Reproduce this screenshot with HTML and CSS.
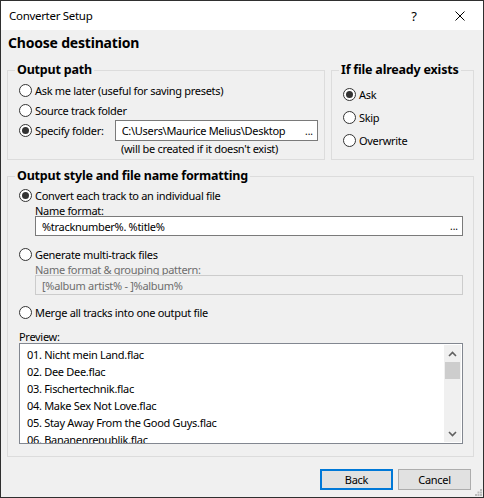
FILE: index.html
```html
<!DOCTYPE html>
<html>
<head>
<meta charset="utf-8">
<title>Converter Setup</title>
<link rel="stylesheet" href="styles.css">
</head>
<body>
<div class="window">
  <div class="titlebar">
    <div class="title">Converter Setup</div>
    <div class="caption-btn help">?</div>
    <div class="caption-btn close">
      <svg width="10" height="10" viewBox="0 0 10 10"><path d="M0.5 0.5 L9.5 9.5 M9.5 0.5 L0.5 9.5" stroke="#000" stroke-width="1" fill="none"/></svg>
    </div>
  </div>
  <div class="content">
    <div class="heading">Choose destination</div>
    <div class="top-row">
      <div class="group group-path">
        <div class="group-title">Output path</div>
        <div class="rows-path">
          <div class="row"><span class="radio"></span><span class="label">Ask me later (useful for saving presets)</span></div>
          <div class="row"><span class="radio"></span><span class="label">Source track folder</span></div>
          <div class="row row-folder"><span class="radio checked"></span><span class="label folder-label">Specify folder:</span>
            <div class="field folder-field"><span class="field-text">C:\Users\Maurice Melius\Desktop</span><span class="dots">...</span></div>
          </div>
          <div class="note">(will be created if it doesn't exist)</div>
        </div>
      </div>
      <div class="group group-exists">
        <div class="group-title">If file already exists</div>
        <div class="rows-exists">
          <div class="row tall"><span class="radio checked"></span><span class="label">Ask</span></div>
          <div class="row tall"><span class="radio"></span><span class="label">Skip</span></div>
          <div class="row tall"><span class="radio"></span><span class="label">Overwrite</span></div>
        </div>
      </div>
    </div>
    <div class="group group-style">
      <div class="group-title">Output style and file name formatting</div>
      <div class="style-body">
        <div class="row r1"><span class="radio checked"></span><span class="label">Convert each track to an individual file</span></div>
        <div class="sub-label">Name format:</div>
        <div class="field sub-field"><span class="field-text">%tracknumber%. %title%</span><span class="dots">...</span></div>
        <div class="row r2"><span class="radio"></span><span class="label">Generate multi-track files</span></div>
        <div class="sub-label disabled">Name format &amp; grouping pattern:</div>
        <div class="field sub-field disabled-field"><span class="field-text">[%album artist% - ]%album%</span></div>
        <div class="row r3"><span class="radio"></span><span class="label">Merge all tracks into one output file</span></div>
        <div class="preview-label">Preview:</div>
        <div class="listbox">
          <div class="list-items">
            <div class="item">01. Nicht mein Land.flac</div>
            <div class="item">02. Dee Dee.flac</div>
            <div class="item">03. Fischertechnik.flac</div>
            <div class="item">04. Make Sex Not Love.flac</div>
            <div class="item">05. Stay Away From the Good Guys.flac</div>
            <div class="item">06. Bananenrepublik.flac</div>
          </div>
          <div class="scrollbar">
            <div class="arrow">
              <svg width="9" height="6" viewBox="0 0 9 6"><path d="M1 5 L4.5 1.5 L8 5" stroke="#606060" stroke-width="1.6" fill="none"/></svg>
            </div>
            <div class="thumb"></div>
            <div class="track"></div>
            <div class="arrow">
              <svg width="9" height="6" viewBox="0 0 9 6"><path d="M1 1 L4.5 4.5 L8 1" stroke="#606060" stroke-width="1.6" fill="none"/></svg>
            </div>
          </div>
        </div>
      </div>
    </div>
    <div class="buttons">
      <div class="btn default">Back</div>
      <div class="btn">Cancel</div>
    </div>
  </div>
  <svg class="grip" width="7" height="7" viewBox="0 0 7 7">
    <rect x="5" y="0" width="2" height="2" fill="#bcbcbc"/>
    <rect x="2.5" y="2.5" width="2" height="2" fill="#bcbcbc"/>
    <rect x="5" y="2.5" width="2" height="2" fill="#bcbcbc"/>
    <rect x="0" y="5" width="2" height="2" fill="#bcbcbc"/>
    <rect x="2.5" y="5" width="2" height="2" fill="#bcbcbc"/>
    <rect x="5" y="5" width="2" height="2" fill="#bcbcbc"/>
  </svg>
</div>
</body>
</html>
```
FILE: styles.css
```css
* { box-sizing: border-box; }
html, body { margin: 0; padding: 0; }
body {
  font-family: "Noto Sans", "Open Sans", sans-serif;
  font-size: 11px;
  letter-spacing: -0.3px;
  color: #000;
  background: #fff;
}
.window {
  position: relative;
  width: 484px;
  height: 498px;
  border: 1px solid #2f2f2f;
  background: #f0f0f0;
  display: flex;
  flex-direction: column;
}
.titlebar {
  height: 29px;
  background: #fff;
  display: flex;
  align-items: center;
}
.title {
  flex: 1;
  padding-left: 8px;
  font-size: 11.5px;
  letter-spacing: -0.3px;
}
.caption-btn {
  width: 46px;
  height: 29px;
  display: flex;
  align-items: center;
  justify-content: center;
}
.help { font-size: 13px; }
.content {
  flex: 1;
  display: flex;
  flex-direction: column;
  padding: 4px 9px 0 6px;
}
.heading {
  font-weight: bold;
  font-size: 14px;
  letter-spacing: -0.2px;
  line-height: 18px;
  height: 18px;
  padding-left: 1px;
}
.top-row {
  display: flex;
  gap: 6px;
  margin-top: 18px;
}
.group {
  border: 1px solid #dcdcdc;
}
.group-title {
  width: fit-content;
  margin: -9px 0 0 -4px;
  padding: 0 2px;
  background: #f0f0f0;
  font-weight: bold;
  font-size: 12.5px;
  letter-spacing: -0.2px;
  line-height: 16px;
  height: 16px;
  white-space: nowrap;
}
.group-path {
  width: 318px;
  height: 90px;
  padding: 0 6px 0 11px;
}
.group-exists {
  width: 144px;
  height: 90px;
  padding: 0 6px 0 11px;
}
.rows-path { margin-top: 2px; }
.rows-exists { margin-top: 5px; }
.row {
  display: flex;
  align-items: center;
  height: 20px;
}
.row.tall { height: 23px; }
.row-folder { height: 21px; }
.radio {
  width: 13px;
  height: 13px;
  border: 1px solid #333;
  border-radius: 50%;
  background: #fff;
  display: grid;
  place-items: center;
  flex: none;
}
.radio.checked::after {
  content: "";
  width: 7px;
  height: 7px;
  border-radius: 50%;
  background: #333;
}
.label {
  margin-left: 3px;
  white-space: nowrap;
}
.folder-label { width: 80px; }
.field {
  height: 20px;
  border: 1px solid #7a7a7a;
  background: #fff;
  display: flex;
  align-items: center;
  padding: 0 4px 0 6px;
}
.folder-field {
  width: 204px;
  height: 21px;
}
.field-text {
  flex: 1;
  white-space: nowrap;
  overflow: hidden;
}
.dots { font-size: 10px; letter-spacing: 0; }
.note {
  line-height: 16px;
  height: 16px;
  padding-left: 102px;
}
.group-style {
  margin-top: 16px;
  height: 281px;
  padding: 0 10px 0 11px;
}
.style-body {
  display: flex;
  flex-direction: column;
}
.r1 { margin-top: 2px; height: 18px; }
.sub-label {
  margin-left: 16px;
  height: 12px;
  line-height: 14px;
}
.sub-label.disabled { color: #6d6d6d; }
.sub-field { margin-left: 16px; }
.disabled-field {
  border-color: #cccccc;
  background: #f0f0f0;
  color: #6d6d6d;
}
.r2 { margin-top: 9px; height: 18px; }
.r3 { margin-top: 8px; height: 18px; }
.preview-label {
  margin-top: 9px;
  height: 13px;
  line-height: 14px;
}
.listbox {
  height: 101px;
  border: 1px solid #828790;
  background: #fff;
  display: flex;
}
.list-items {
  flex: 1;
  padding: 2px 0 0 7px;
  overflow: hidden;
}
.item {
  line-height: 17px;
  height: 17px;
  white-space: nowrap;
}
.scrollbar {
  width: 17px;
  margin: 1px 1px 1px 0;
  background: #f0f0f0;
  display: flex;
  flex-direction: column;
}
.arrow {
  height: 17px;
  display: flex;
  align-items: center;
  justify-content: center;
}
.thumb {
  height: 17px;
  margin: 0 1px;
  background: #cdcdcd;
}
.track { flex: 1; }
.buttons {
  display: flex;
  justify-content: flex-end;
  gap: 5px;
  margin-top: 12px;
  padding-right: 3px;
}
.btn {
  width: 73px;
  height: 21px;
  border: 1px solid #adadad;
  background: #e1e1e1;
  display: flex;
  align-items: center;
  justify-content: center;
}
.btn.default {
  border: 2px solid #0078d7;
}
.grip {
  position: absolute;
  right: 1px;
  bottom: 1px;
}
```
